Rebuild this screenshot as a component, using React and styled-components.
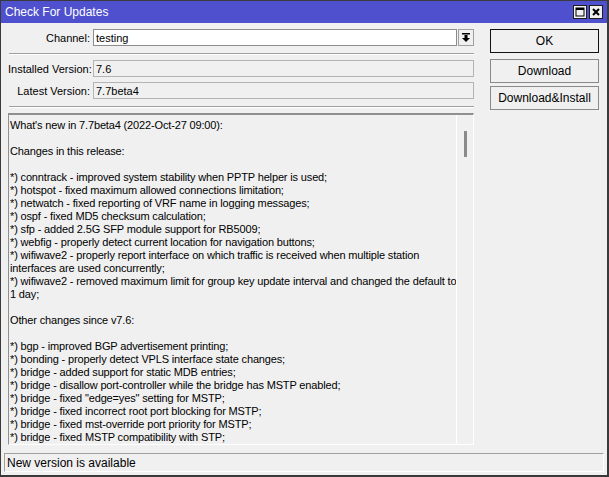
import styled, { createGlobalStyle } from 'styled-components';

const GlobalStyle = createGlobalStyle`
  html, body { margin: 0; padding: 0; background: #f0f0f0; }
  body { font-family: "Liberation Sans", Arial, sans-serif; font-size: 11px; color: #000; }
`;

const Window = styled.div`
  width: 609px;
  height: 477px;
  box-sizing: border-box;
  border: 1px solid #3a3a3a;
  border-right-width: 2px;
  border-bottom-width: 2px;
  background: #f0f0f0;
  display: flex;
  flex-direction: column;
  overflow: hidden;
`;

const TitleBar = styled.div`
  height: 22px;
  flex: none;
  background: #4f50cd;
  display: flex;
  align-items: center;
  padding: 0 4px 0 4px;
  color: #fff;
  font-size: 12px;
`;

const Title = styled.span`
  flex: 1;
`;

const TitleButton = styled.div`
  width: 12px;
  height: 12px;
  border: 1px solid #1e1e1e;
  background: #f0f0f0;
  margin-left: 2px;
  display: flex;
  align-items: center;
  justify-content: center;
`;

const Body = styled.div`
  flex: 1;
  display: flex;
  gap: 16px;
  padding: 6px 0 0 7px;
  min-height: 0;
`;

const LeftCol = styled.div`
  width: 466px;
  display: flex;
  flex-direction: column;
`;

const RightCol = styled.div`
  width: 109px;
  display: flex;
  flex-direction: column;
`;

const Row = styled.div`
  display: flex;
  align-items: center;
  height: 17px;
  margin-top: ${p => p.$mt || 0}px;
`;

const Label = styled.div`
  width: 82px;
  padding-right: 3px;
  text-align: right;
  white-space: nowrap;
`;

const Field = styled.div`
  flex: 1;
  height: 17px;
  box-sizing: border-box;
  border: 1px solid ${p => (p.$white ? '#8c8c8c' : '#b4b4b4')};
  background: ${p => (p.$white ? '#fff' : '#f0f0f0')};
  padding: 0 2px;
  display: flex;
  align-items: center;
`;

const DropButton = styled.div`
  width: 16px;
  height: 17px;
  box-sizing: border-box;
  margin-left: 1px;
  border: 1px solid #a0a0a0;
  background: #f0f0f0;
  display: flex;
  align-items: center;
  justify-content: center;
`;

const Separator = styled.div`
  height: 0;
  border-top: 1px solid #a0a0a0;
  border-bottom: 1px solid #fff;
  margin: ${p => p.$m};
`;

const TextBox = styled.div`
  flex: none;
  height: 332px;
  box-sizing: border-box;
  border-style: solid;
  border-width: 2px 1px 1px 1px;
  border-color: #8f8f8f #fff #fff #8f8f8f;
  display: flex;
`;

const TextContent = styled.div`
  flex: 1;
  padding: 4px 0 0 1px;
  overflow: hidden;
  border-right: 1px solid #fff;
  letter-spacing: -0.15px;
`;

const Line = styled.div`
  height: 13px;
  line-height: 13px;
  white-space: nowrap;
`;

const ScrollTrack = styled.div`
  width: 16px;
  display: flex;
  justify-content: center;
  padding-top: 16px;
`;

const Thumb = styled.div`
  width: 3px;
  height: 26px;
  background: #8a8a8a;
`;

const Button = styled.div`
  height: 24px;
  box-sizing: border-box;
  border: 1px solid ${p => (p.$default ? '#111' : '#8a8a8a')};
  background: #f0f0f0;
  display: flex;
  align-items: center;
  justify-content: center;
  font-size: 12px;
  margin-top: ${p => p.$mt || 0}px;
`;

const StatusBar = styled.div`
  flex: none;
  height: 19px;
  margin: 6px 3px 3px 3px;
  box-sizing: border-box;
  border-style: solid;
  border-width: 1px;
  border-color: #a0a0a0 #fff #fff #a0a0a0;
  display: flex;
  align-items: center;
  padding-left: 2px;
  font-size: 12px;
`;

const lines = [
  "What's new in 7.7beta4 (2022-Oct-27 09:00):",
  '',
  'Changes in this release:',
  '',
  '*) conntrack - improved system stability when PPTP helper is used;',
  '*) hotspot - fixed maximum allowed connections limitation;',
  '*) netwatch - fixed reporting of VRF name in logging messages;',
  '*) ospf - fixed MD5 checksum calculation;',
  '*) sfp - added 2.5G SFP module support for RB5009;',
  '*) webfig - properly detect current location for navigation buttons;',
  '*) wifiwave2 - properly report interface on which traffic is received when multiple station',
  'interfaces are used concurrently;',
  '*) wifiwave2 - removed maximum limit for group key update interval and changed the default to',
  '1 day;',
  '',
  'Other changes since v7.6:',
  '',
  '*) bgp - improved BGP advertisement printing;',
  '*) bonding - properly detect VPLS interface state changes;',
  '*) bridge - added support for static MDB entries;',
  '*) bridge - disallow port-controller while the bridge has MSTP enabled;',
  '*) bridge - fixed "edge=yes" setting for MSTP;',
  '*) bridge - fixed incorrect root port blocking for MSTP;',
  '*) bridge - fixed mst-override port priority for MSTP;',
  '*) bridge - fixed MSTP compatibility with STP;',
];

const MaxIcon = () => (
  <svg width="10" height="10" viewBox="0 0 10 10">
    <rect x="1" y="1" width="8" height="8" fill="none" stroke="#000" strokeWidth="1" />
    <rect x="1" y="1" width="8" height="2" fill="#000" />
  </svg>
);

const CloseIcon = () => (
  <svg width="10" height="10" viewBox="0 0 10 10">
    <path d="M2 2 L8 8 M8 2 L2 8" stroke="#000" strokeWidth="2" />
  </svg>
);

const DropIcon = () => (
  <svg width="8" height="9" viewBox="0 0 8 9">
    <rect x="0" y="0" width="8" height="1.5" fill="#000" />
    <rect x="2.5" y="2" width="3" height="3" fill="#000" />
    <path d="M0 5 L8 5 L4 9 Z" fill="#000" />
  </svg>
);

export default function App() {
  return (
    <>
      <GlobalStyle />
      <Window>
        <TitleBar>
          <Title>Check For Updates</Title>
          <TitleButton><MaxIcon /></TitleButton>
          <TitleButton><CloseIcon /></TitleButton>
        </TitleBar>
        <Body>
          <LeftCol>
            <Row>
              <Label>Channel:</Label>
              <Field $white>testing</Field>
              <DropButton><DropIcon /></DropButton>
            </Row>
            <Separator $m="7px 0 5px 1px" />
            <Row>
              <Label>Installed Version:</Label>
              <Field>7.6</Field>
            </Row>
            <Row $mt={5}>
              <Label>Latest Version:</Label>
              <Field>7.7beta4</Field>
            </Row>
            <Separator $m="7px 0 5px 1px" />
            <TextBox>
              <TextContent>
                {lines.map((l, i) => (
                  <Line key={i}>{l || '\u00a0'}</Line>
                ))}
              </TextContent>
              <ScrollTrack><Thumb /></ScrollTrack>
            </TextBox>
          </LeftCol>
          <RightCol>
            <Button $default>OK</Button>
            <Button $mt={6}>Download</Button>
            <Button $mt={3}>Download&amp;Install</Button>
          </RightCol>
        </Body>
        <StatusBar>New version is available</StatusBar>
      </Window>
    </>
  );
}
